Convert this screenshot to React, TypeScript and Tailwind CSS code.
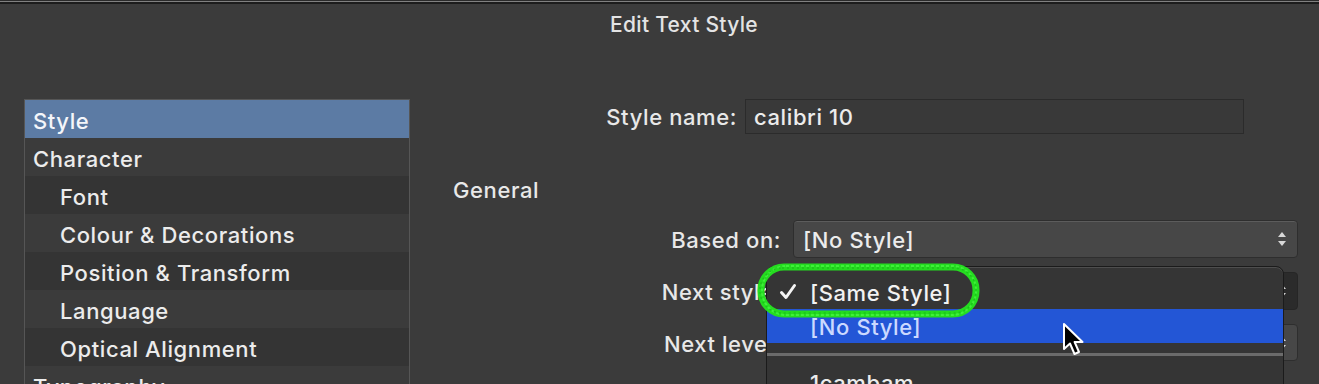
import React from 'react';

const SIDEBAR = [
  { label: 'Style', indent: false, selected: true },
  { label: 'Character', indent: false },
  { label: 'Font', indent: true },
  { label: 'Colour & Decorations', indent: true },
  { label: 'Position & Transform', indent: true },
  { label: 'Language', indent: true },
  { label: 'Optical Alignment', indent: true },
  { label: 'Typography', indent: false },
];

function Arrows({ className = '' }: { className?: string }) {
  return (
    <svg width="10" height="16" viewBox="0 0 10 16" className={className}>
      <path d="M5 1 L9 6 L1 6 Z" fill="currentColor" />
      <path d="M1 10 L9 10 L5 15 Z" fill="currentColor" />
    </svg>
  );
}

function Check() {
  return (
    <svg width="18" height="18" viewBox="0 0 18 18">
      <path d="M2.5 9.5 L7 14.5 L15.5 2.5" fill="none" stroke="#f4f4f4" strokeWidth="3" strokeLinecap="round" strokeLinejoin="round" />
    </svg>
  );
}

function Cursor() {
  return (
    <svg width="26" height="36" viewBox="0 0 26 36" className="absolute left-[1062px] top-[322px]">
      <path
        d="M2 2 L2 27 L8 21.5 L12.5 32 L17 30 L12.6 20 L20.5 20 Z"
        fill="#000"
        stroke="#fff"
        strokeWidth="2"
        strokeLinejoin="round"
      />
    </svg>
  );
}

function Marker() {
  return (
    <svg width="226" height="58" viewBox="0 0 226 58" className="pointer-events-none absolute left-[756px] top-[262px]">
      <rect x="5" y="5" width="215" height="47" rx="23" fill="none" stroke="#25dc20" strokeWidth="7" />
      <rect x="6" y="4" width="214" height="49" rx="24" fill="none" stroke="#3ff03a" strokeWidth="2" strokeDasharray="3 2" />
      <rect x="4" y="6" width="216" height="45" rx="22" fill="none" stroke="#1cc41a" strokeWidth="1.5" strokeDasharray="2 3" />
    </svg>
  );
}

export default function App() {
  return (
    <div
      className="relative h-[384px] w-[1319px] overflow-hidden bg-[#3b3b3b] font-medium text-[#ececec]"
      style={{ fontFamily: 'Inter, "Noto Sans", sans-serif' }}
    >
      <div className="h-px bg-[#2a2a2a]" />
      <div className="h-px bg-[#808080]" />
      <div className="h-[2px] bg-[#1c1c1c]" />

      <div className="mt-[10px] pl-[49px] text-center text-[21px] leading-[22px] tracking-[0.3px] text-[#e4e4e4]">
        Edit Text Style
      </div>

      <div className="mt-[63px] flex text-[22px] tracking-[0.6px]">
        {/* Left: section list */}
        <div className="ml-[24px] w-[386px] shrink-0 border border-[#565656] bg-[#363636]">
          {SIDEBAR.map((item, i) => (
            <div
              key={item.label}
              className={
                'flex h-[38px] items-center pt-[5px] ' +
                (item.selected ? 'bg-[#5c7ba4] text-[#f4f6fa]' : i % 2 === 1 ? 'bg-[#3b3b3b]' : 'bg-[#343434]') +
                (item.indent ? ' pl-[35px]' : ' pl-[8px]')
              }
            >
              {item.label}
            </div>
          ))}
        </div>

        {/* Right: form */}
        <div className="flex flex-1 flex-col">
          <div className="-mt-px flex items-center">
            <span className="w-[327px] pt-[3px] text-right text-[#e8e8e8]">Style name:</span>
            <div className="ml-[8px] flex h-[35px] w-[499px] items-center border border-[#2b2b2b] bg-[#393939] pl-[8px] pt-[3px]">
              calibri 10
            </div>
          </div>

          <div className="ml-[43px] mt-[38px] leading-[36px] text-[#e8e8e8]">General</div>

          <div className="mt-[12px] flex items-center">
            <span className="w-[371px] pt-[3px] text-right text-[#e8e8e8]">Based on:</span>
            <div className="ml-[12px] flex h-[38px] w-[505px] items-center justify-between rounded-[4px] border border-[#2e2e2e] bg-[#474747] pl-[9px] pr-[10px] pt-[3px] shadow-[inset_0_1px_0_#5c5c5c]">
              <span>[No Style]</span>
              <Arrows className="-mt-[3px] text-[#d8d8d8]" />
            </div>
          </div>

          <div className="mt-[14px] flex items-center">
            <span className="w-[371px] pt-[3px] text-right text-[#e8e8e8]">Next style:</span>
            <div className="ml-[12px] flex h-[38px] w-[505px] items-center justify-end rounded-[4px] border border-[#262626] bg-[#2b2b2b] pr-[10px]">
              <Arrows className="text-[#cfcfcf]" />
            </div>
          </div>

          <div className="mt-[14px] flex items-center">
            <span className="w-[371px] pt-[3px] text-right text-[#e8e8e8]">Next level:</span>
            <div className="ml-[12px] flex h-[37px] w-[505px] items-center justify-end rounded-[4px] border border-[#2e2e2e] bg-[#474747] pr-[10px]">
              <Arrows className="text-[#d8d8d8]" />
            </div>
          </div>
        </div>
      </div>

      {/* Open popup menu */}
      <div className="absolute left-[766px] top-[266px] h-[140px] w-[518px] rounded-t-[8px] border border-[#1b1b1b] bg-[#353535] pt-[8px] text-[22px] tracking-[0.6px] shadow-[inset_0_1px_0_#4e4e4e]">
        <div className="flex h-[34px] items-center pt-[3px]">
          <span className="-mt-[3px] flex w-[43px] justify-start pl-[12px]">
            <Check />
          </span>
          <span className="text-[#f2f2f2]">[Same Style]</span>
        </div>
        <div className="flex h-[34px] items-center bg-[#2356d6] pl-[43px] pt-[3px] text-[#cbd9ff]">[No Style]</div>
        <div className="mt-[10px] h-[3px] bg-[#6b6b6b]" />
        <div className="flex h-[34px] items-center pl-[43px] pt-[20px]">1cambam</div>
      </div>

      <Marker />
      <Cursor />
    </div>
  );
}
